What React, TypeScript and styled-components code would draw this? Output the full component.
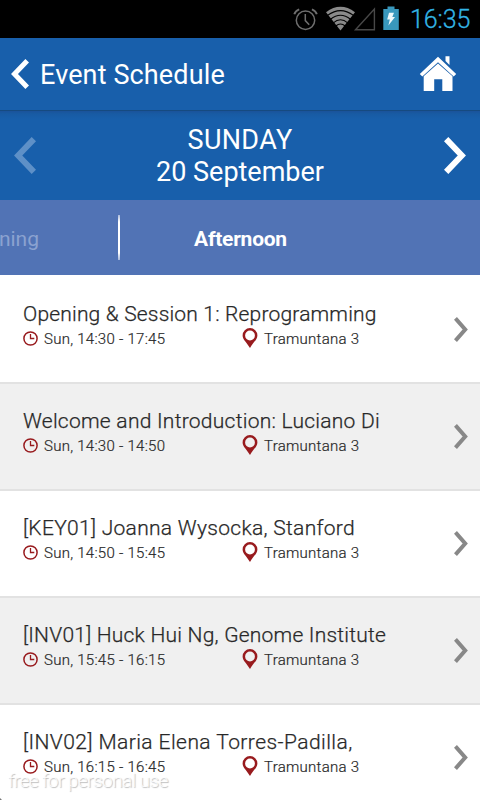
import React from "react";
import styled, { createGlobalStyle } from "styled-components";

const GlobalStyle = createGlobalStyle`
  * { box-sizing: border-box; }
  body { margin: 0; background: #fff; font-family: Roboto, "Noto Sans", sans-serif; }
  svg { display: block; flex: none; }
`;

const Screen = styled.main`
  position: relative;
  display: flex;
  flex-direction: column;
  width: 480px;
  height: 800px;
  overflow: hidden;
  background: #fff;
`;

const StatusBar = styled.div`
  display: flex;
  flex: none;
  align-items: flex-start;
  height: 38px;
  padding-left: 293px;
  background: #000;
`;

const StatusTime = styled.span`
  margin-left: 9px;
  padding-top: 4px;
  font-size: 25px;
  line-height: 32px;
  font-weight: 300;
  letter-spacing: -0.1px;
  color: #33b5e5;
  -webkit-text-stroke: 0.3px #33b5e5;
`;

const Header = styled.header`
  display: flex;
  flex: none;
  align-items: center;
  height: 72px;
  padding: 0 23px 0 11px;
  background: #185fab;
`;

const HeaderTitle = styled.h1`
  flex: 1;
  margin: 2px 0 0 11px;
  font-size: 27px;
  line-height: 34px;
  font-weight: 400;
  letter-spacing: 0.13px;
  color: #fff;
`;

const DayBar = styled.section`
  display: flex;
  flex: none;
  align-items: center;
  justify-content: space-between;
  height: 90px;
  padding: 0 14px;
  background: linear-gradient(#164a80 0, #164a80 1px, #1a539a 1px, #185ba4 4px, #185fab 9px);
`;

const DayLabel = styled.div`
  padding-top: 2px;
  font-size: 27px;
  line-height: 32px;
  text-align: center;
  color: #fff;
`;

const DayLine = styled.div<{ $spacing: number }>`
  letter-spacing: ${(p) => p.$spacing}px;
`;

const Tabs = styled.nav`
  display: flex;
  flex: none;
  align-items: center;
  height: 75px;
  background: #5173b5;
`;

const Tab = styled.div<{ $active?: boolean }>`
  display: flex;
  justify-content: ${(p) => (p.$active ? "center" : "flex-end")};
  width: ${(p) => (p.$active ? 241 : 118)}px;
  padding: ${(p) => (p.$active ? "3px 0 0" : "3px 79px 0 0")};
  font-size: 21px;
  line-height: 26px;
  font-weight: ${(p) => (p.$active ? 700 : 400)};
  letter-spacing: ${(p) => (p.$active ? -0.25 : 0)}px;
  color: ${(p) => (p.$active ? "#fff" : "#8ba2d0")};
  white-space: nowrap;
`;

const TabDivider = styled.div`
  width: 2px;
  height: 45px;
  background: linear-gradient(#a9b9da 0, #dce3f0 4px, #fff 7px, #fff 38px, #dce3f0 40px, #a9b9da 45px);
`;

const List = styled.div`
  flex: none;
  padding-top: 2px;
`;

const Row = styled.article<{ $shaded: boolean }>`
  display: flex;
  align-items: center;
  justify-content: space-between;
  height: 107px;
  padding: 0 12px 0 23px;
  border-bottom: 2px solid #e2e2e2;
  background: ${(p) => (p.$shaded ? "#f0f0f0" : "#fff")};
`;

const RowBody = styled.div`
  align-self: flex-start;
  padding-top: 24px;
`;

const RowTitle = styled.h2<{ $spacing: number }>`
  margin: 0;
  font-size: 21px;
  line-height: 26px;
  font-weight: 300;
  letter-spacing: ${(p) => p.$spacing}px;
  color: #282828;
  -webkit-text-stroke: 0.25px #282828;
  white-space: nowrap;
`;

const Meta = styled.div`
  display: grid;
  grid-template-columns: 219px auto;
  margin-top: 2px;
`;

const MetaItem = styled.div<{ $spacing: number }>`
  display: flex;
  align-items: flex-start;
  gap: 6px;
  font-size: 15px;
  height: 20px;
  line-height: 20px;
  letter-spacing: ${(p) => p.$spacing}px;
  font-weight: 300;
  color: #282828;
  -webkit-text-stroke: 0.2px #282828;
  white-space: nowrap;
`;

const Watermark = styled.div`
  position: absolute;
  left: 8px;
  top: 769px;
  font-size: 19px;
  line-height: 24px;
  font-weight: 300;
  letter-spacing: -0.55px;
  color: rgba(255, 255, 255, 0.85);
  text-shadow: 1px 1px 1px rgba(0, 0, 0, 0.26);
  white-space: nowrap;
`;

const CornerMark = styled.div`
  position: absolute;
  left: 0;
  bottom: 0;
  border-left: 2px solid #777;
  border-top: 2px solid transparent;
`;

const StatusIcons = () => (
  <svg width="108" height="38" viewBox="293 0 108 38" fill="none">
    <g stroke="#6e6e6e" strokeWidth="1.5">
      <circle cx="305.5" cy="20.3" r="9.2" />
      <path d="M305.3 14v6.600l3.900 4.200" />
      <path d="M294.300 14.200q1-3.400 4.900-4.800M316.800 14.200q-1-3.400-4.900-4.800" strokeWidth="1.900" />
    </g>
    <path d="M326 12.2Q340.500 1.500 355 12.200L340.500 30.500Z" fill="#8a8a8a" />
    <g stroke="#000" strokeWidth="1.1">
      <path d="M327.500 15.400Q340.500 5.800 353.500 15.400" />
      <path d="M330.500 19.300Q340.500 11.300 350.500 19.300" />
      <path d="M333.300 22.900Q340.500 16.700 347.700 22.900" />
      <path d="M335.800 26Q340.500 22 345.200 26" />
    </g>
    <path d="M355.500 29.700L374.400 9V29.700Z" stroke="#484848" strokeWidth="1.4" />
    <path d="M383.300 9H387.500V6.500H394.500V9H398.800V30H383.300Z" fill="#3998bd" />
    <path d="M389 12.800H394L392.300 17H395L388.400 25.500L389.800 19.600H387.200Z" fill="#eef8fb" />
  </svg>
);

const Chevron = ({ w, h, stroke, color, left }: { w: number; h: number; stroke: number; color: string; left?: boolean }) => {
  const inset = stroke * 0.36;
  const tip = stroke * 0.7;
  const points = left
    ? `${w - inset},${inset} ${tip},${h / 2} ${w - inset},${h - inset}`
    : `${inset},${inset} ${w - tip},${h / 2} ${inset},${h - inset}`;
  return (
    <svg width={w} height={h} viewBox={`0 0 ${w} ${h}`} fill="none">
      <polyline points={points} stroke={color} strokeWidth={stroke} />
    </svg>
  );
};

const HomeIcon = () => (
  <svg width="38" height="36" viewBox="0 0 38 36" fill="#fff">
    <path d="M26.500 0.300H30.500V9L26.500 5Z" />
    <path d="M0.800 18L19 0.800L37.200 18L34.700 20.500L19 6.200L3.300 20.500Z" />
    <path d="M4.700 20.200L19 7.400L33.500 20.200V35H23.300V23.300H15.200V35H4.700Z" />
  </svg>
);

const ClockSvg = styled.svg`
  margin-top: 2px;
`;

const PinSvg = styled.svg`
  margin-top: -1px;
`;

const ClockIcon = () => (
  <ClockSvg width="15" height="15" viewBox="0 0 15 15" fill="none" stroke="#981b1e">
    <circle cx="7.500" cy="7.500" r="6.600" strokeWidth="1.500" />
    <path d="M7.500 3V7.500H11.300" strokeWidth="1.300" />
  </ClockSvg>
);

const PinIcon = () => (
  <PinSvg width="16" height="20" viewBox="0 0 16 20" fill="#981b1e" fillRule="evenodd">
    <path d="M8 0A7.400 7.400 0 0 0 .6 7.400C.6 11.700 5 14.500 8 20C11 14.500 15.400 11.700 15.400 7.400A7.400 7.400 0 0 0 8 0ZM8 2.600A4.900 4.900 0 1 1 8 12.400A4.900 4.900 0 1 1 8 2.600Z" />
  </PinSvg>
);

const sessions = [
  { title: "Opening & Session 1: Reprogramming", time: "Sun, 14:30 - 17:45", spacing: 0.18 },
  { title: "Welcome and Introduction: Luciano Di", time: "Sun, 14:30 - 14:50", spacing: 0.26 },
  { title: "[KEY01] Joanna Wysocka, Stanford", time: "Sun, 14:50 - 15:45", spacing: 0.3 },
  { title: "[INV01] Huck Hui Ng, Genome Institute", time: "Sun, 15:45 - 16:15", spacing: 0.22 },
  { title: "[INV02] Maria Elena Torres-Padilla,", time: "Sun, 16:15 - 16:45", spacing: 0.43 },
];

export default function App() {
  return (
    <>
      <GlobalStyle />
      <Screen>
        <StatusBar>
          <StatusIcons />
          <StatusTime>16:35</StatusTime>
        </StatusBar>
        <Header>
          <Chevron w={18} h={30} stroke={5} color="#fff" left />
          <HeaderTitle>Event Schedule</HeaderTitle>
          <HomeIcon />
        </Header>
        <DayBar>
          <Chevron w={22} h={37} stroke={6} color="#5e90c7" left />
          <DayLabel>
            <DayLine $spacing={0.35}>SUNDAY</DayLine>
            <DayLine $spacing={0}>20 September</DayLine>
          </DayLabel>
          <Chevron w={22} h={37} stroke={6} color="#fff" />
        </DayBar>
        <Tabs>
          <Tab>Morning</Tab>
          <TabDivider />
          <Tab $active>Afternoon</Tab>
        </Tabs>
        <List>
          {sessions.map((s, i) => (
            <Row key={s.title} $shaded={i % 2 === 1}>
              <RowBody>
                <RowTitle $spacing={s.spacing}>{s.title}</RowTitle>
                <Meta>
                  <MetaItem $spacing={0.27}>
                    <ClockIcon />
                    {s.time}
                  </MetaItem>
                  <MetaItem $spacing={0.27}>
                    <PinIcon />
                    Tramuntana 3
                  </MetaItem>
                </Meta>
              </RowBody>
              <Chevron w={14} h={25} stroke={4} color="#888" />
            </Row>
          ))}
        </List>
        <Watermark>free for personal use</Watermark>
        <CornerMark />
      </Screen>
    </>
  );
}
